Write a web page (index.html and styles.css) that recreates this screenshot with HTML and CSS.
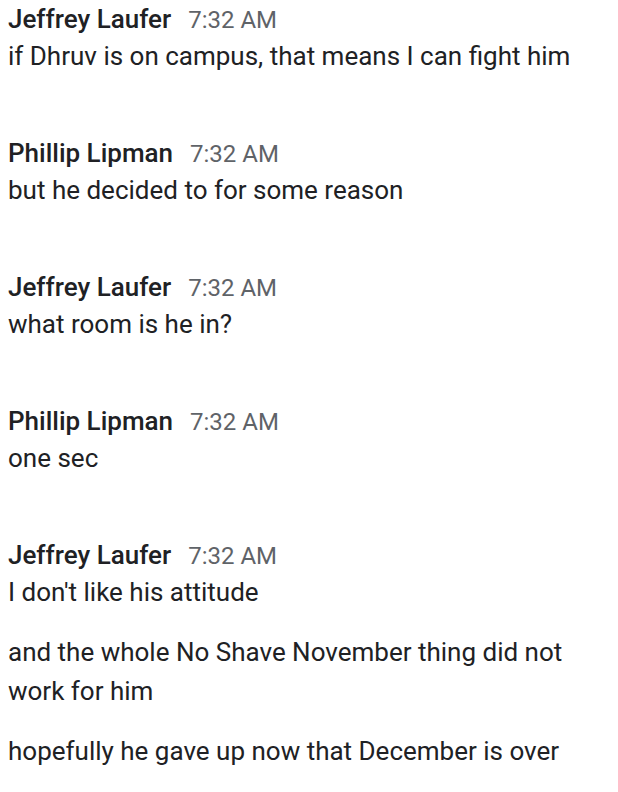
FILE: index.html
```html
<!DOCTYPE html>
<html>
<head>
<meta charset="utf-8">
<link rel="stylesheet" href="styles.css">
</head>
<body>
<div class="chat">
  <div class="group">
    <div class="header"><span class="name">Jeffrey Laufer</span><span class="time">7:32 AM</span></div>
    <div class="msgs"><p class="msg">if Dhruv is on campus, that means I can fight him</p></div>
  </div>
  <div class="group">
    <div class="header"><span class="name">Phillip Lipman</span><span class="time">7:32 AM</span></div>
    <div class="msgs"><p class="msg">but he decided to for some reason</p></div>
  </div>
  <div class="group">
    <div class="header"><span class="name">Jeffrey Laufer</span><span class="time">7:32 AM</span></div>
    <div class="msgs"><p class="msg">what room is he in?</p></div>
  </div>
  <div class="group">
    <div class="header"><span class="name">Phillip Lipman</span><span class="time">7:32 AM</span></div>
    <div class="msgs"><p class="msg">one sec</p></div>
  </div>
  <div class="group">
    <div class="header"><span class="name">Jeffrey Laufer</span><span class="time">7:32 AM</span></div>
    <div class="msgs">
      <p class="msg">I don't like his attitude</p>
      <p class="msg">and the whole No Shave November thing did not work for him</p>
      <p class="msg">hopefully he gave up now that December is over</p>
    </div>
  </div>
</div>
</body>
</html>
```
FILE: styles.css
```css
html, body {
  margin: 0;
  padding: 0;
  background: #ffffff;
}
body {
  font-family: Roboto, "Noto Sans", "Liberation Sans", sans-serif;
  color: #202124;
}
.chat {
  display: flex;
  flex-direction: column;
  gap: 58px;
  padding: 0 8px;
}
.header {
  display: flex;
  align-items: baseline;
  gap: 17px;
  height: 37px;
  line-height: 38px;
}
.name {
  font-size: 26px;
  font-weight: 500;
  color: #202124;
}
.time {
  font-size: 24px;
  font-weight: 400;
  color: #5f6368;
}
.msgs {
  display: flex;
  flex-direction: column;
  gap: 21px;
}
.msg {
  margin: 0;
  font-size: 26px;
  line-height: 39px;
  color: #202124;
}
```
